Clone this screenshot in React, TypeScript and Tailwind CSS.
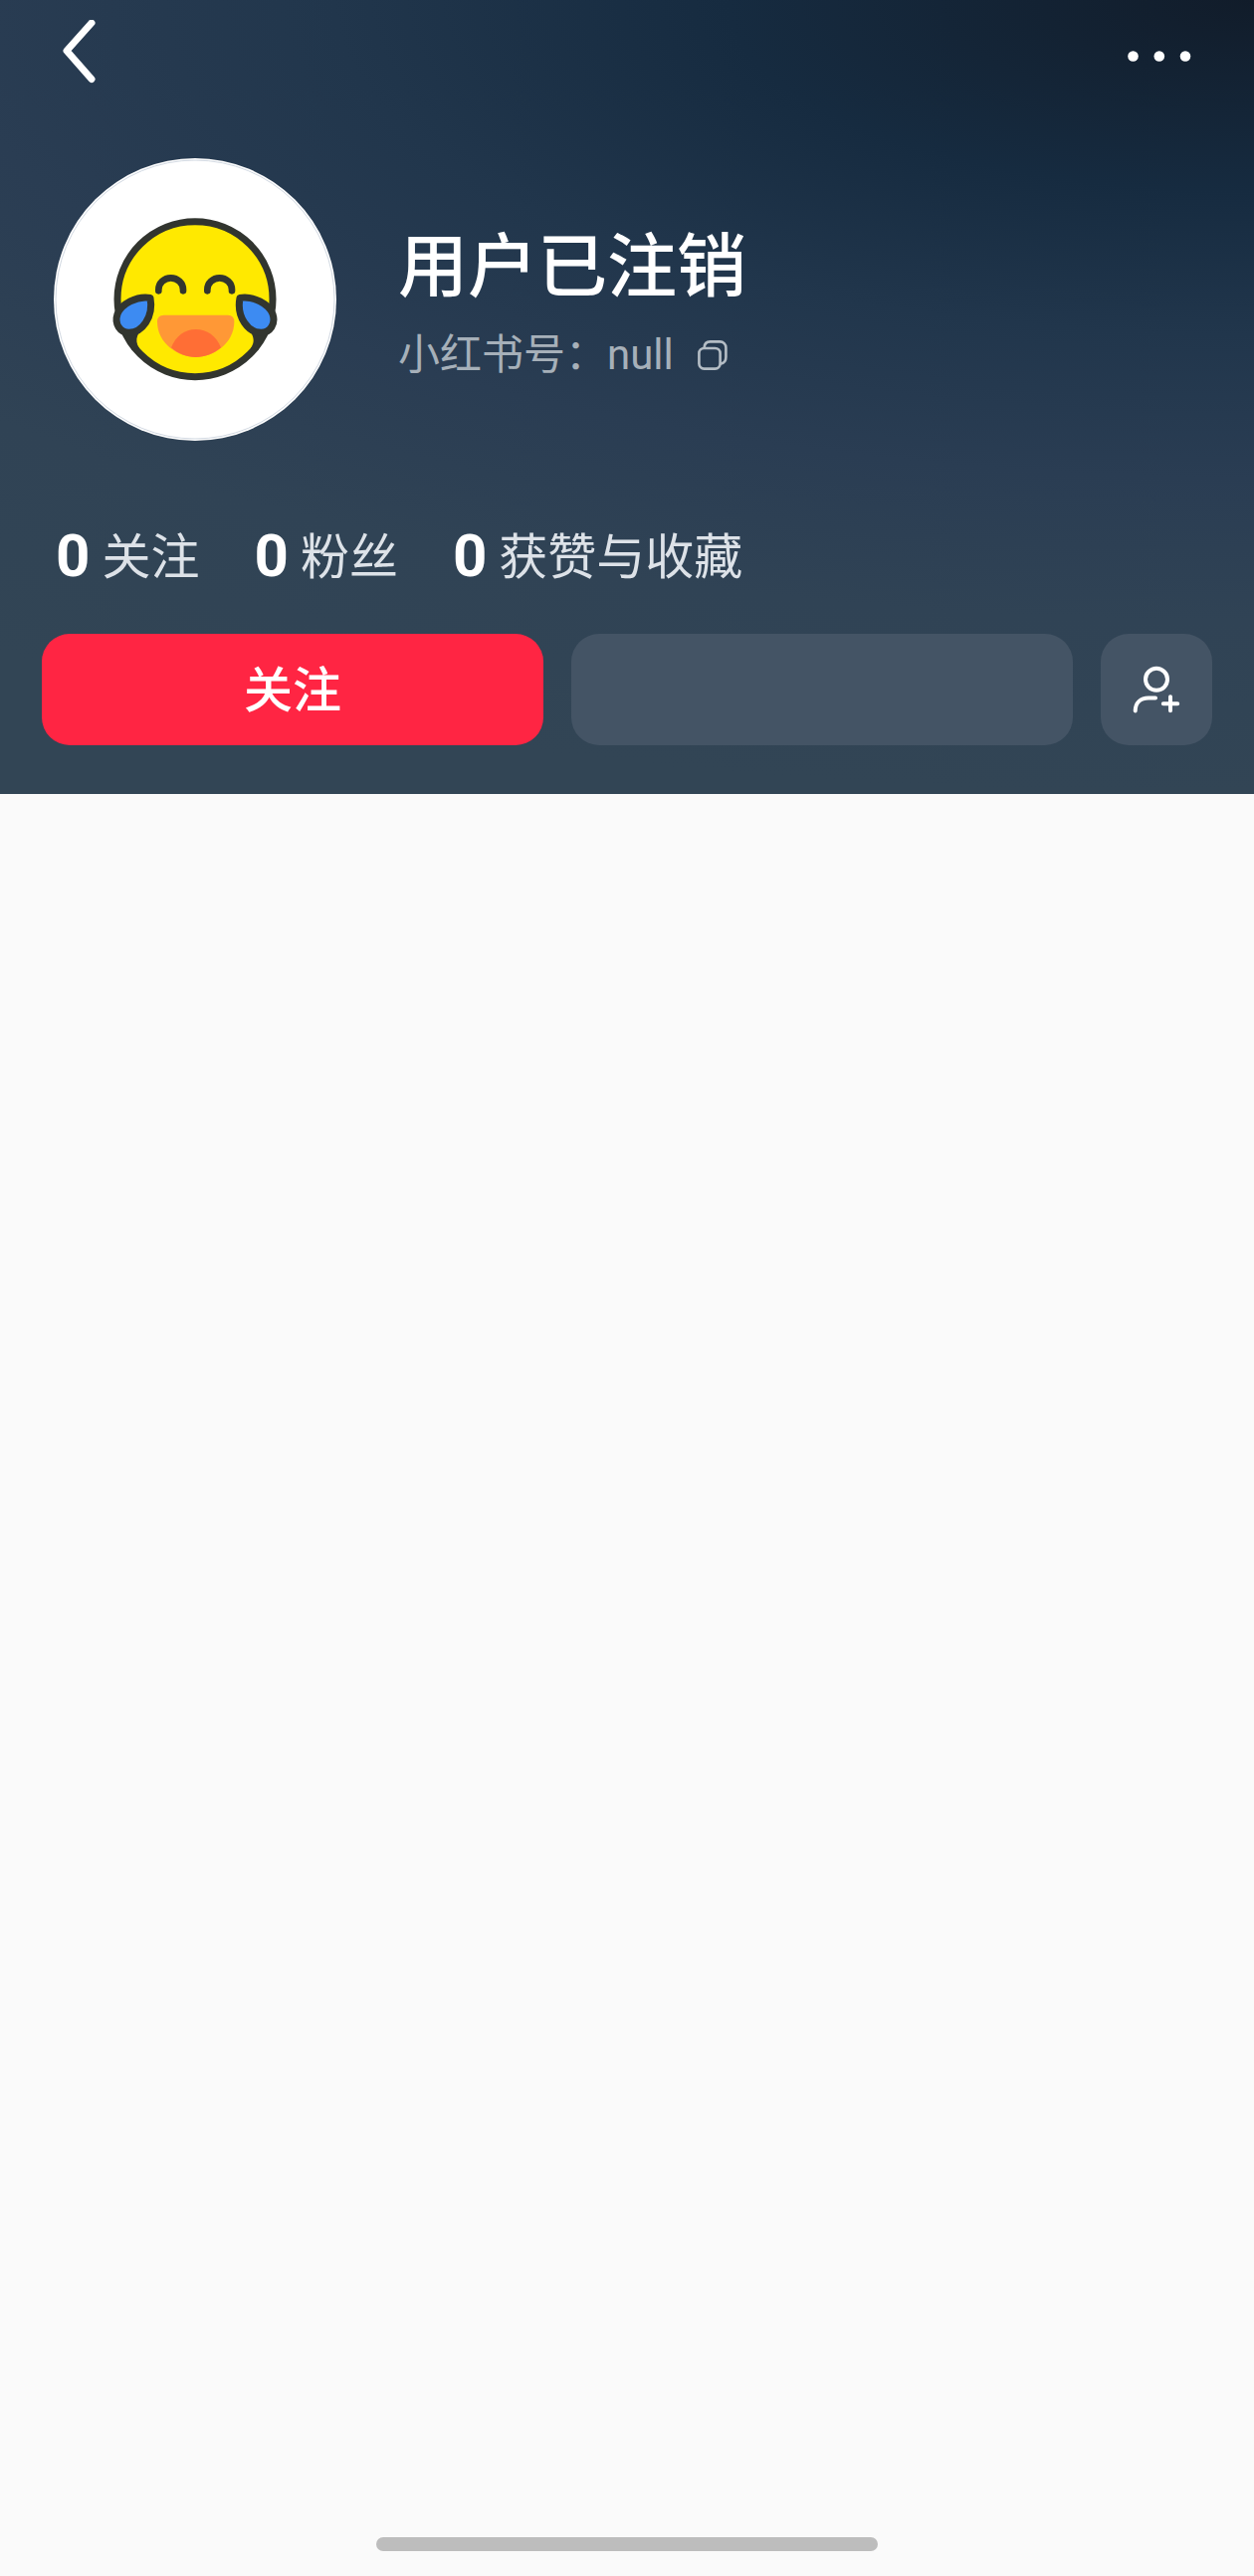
const stats = [
  { label: '关注', value: 0 },
  { label: '粉丝', value: 0 },
  { label: '获赞与收藏', value: 0 },
];

function BackIcon() {
  return (
    <svg className="w-16 h-16" viewBox="0 0 64 64" fill="none" stroke="currentColor" strokeWidth="7" strokeLinecap="round" strokeLinejoin="round">
      <path d="M44 3 19 31 44 59.5" />
    </svg>
  );
}

function MoreIcon() {
  return (
    <svg className="w-16 h-16" viewBox="0 0 64 64" fill="currentColor">
      <circle cx="5.5" cy="36.5" r="5.3" />
      <circle cx="31.8" cy="36.5" r="5.3" />
      <circle cx="58" cy="36.5" r="5.3" />
    </svg>
  );
}

function CopyIcon() {
  return (
    <svg className="w-[30px] h-[30px]" viewBox="0 0 30 30" fill="none" stroke="currentColor" strokeWidth="2.6" strokeLinecap="round">
      <rect x="1.4" y="8" width="21.2" height="20.6" rx="5" />
      <path d="M6.6 7.4C6.8 3.8 9 1.4 12.6 1.4H22.4a6 6 0 0 1 6 6V17c0 3.8-1.8 6-5.4 6.6" />
    </svg>
  );
}

function AddUserIcon() {
  return (
    <svg className="w-14 h-14" viewBox="0 0 56 56" fill="none" stroke="currentColor" strokeWidth="4" strokeLinecap="round">
      <circle cx="28" cy="17.8" r="11" />
      <path d="M6.7 49.4C6.9 41.5 12 36.6 20 36.6H27" />
      <path d="M42 35.2V49.2M34.8 42.3H49.2" />
    </svg>
  );
}

function Tear() {
  return (
    <>
      <path d="M200 512L275 505C255 525 240 546 258 573L236 578Z" fill="#32352f" />
      <path
        d="M291 421C250 414 203 440 192 470C182 500 200 526 227 526C265 526 302 480 291 421Z"
        fill="#3d8bf2"
        stroke="#32352f"
        strokeWidth="21"
        strokeLinejoin="round"
      />
    </>
  );
}

function Avatar() {
  return (
    <svg className="w-[284px] h-[284px] shrink-0" viewBox="0 0 852 852" role="img" aria-label="头像">
      <circle cx="426" cy="426" r="426" fill="#fff" />
      <circle cx="426" cy="426" r="420" fill="none" stroke="#b9c4d2" strokeWidth="2" />
      <circle cx="426" cy="425" r="234" fill="#ffe900" stroke="#32352f" strokeWidth="21" />
      <g fill="none" stroke="#32352f" strokeWidth="20" strokeLinecap="round">
        <path d="M316 400V396a37 35 0 0 1 74 0V400" />
        <path d="M463 400V396a37 35 0 0 1 74 0V400" />
      </g>
      <path d="M332 473H525Q544 473 544 493C544 560 480 600 428 600C376 600 312 560 312 493Q312 473 332 473Z" fill="#ff9836" />
      <path d="M354 571C368 536 395 516 428 516C462 516 490 536 504 571C482 590 455 600 428 600C400 600 376 590 354 571Z" fill="#ff6e35" />
      <Tear />
      <g transform="translate(852 0) scale(-1 1)">
        <Tear />
      </g>
    </svg>
  );
}

export default function App() {
  return (
    <div className="min-h-screen flex flex-col bg-[#fafafa] font-['Noto_Sans_CJK_SC',sans-serif]">
      <header className="px-[42px] pb-[49px] text-white bg-[radial-gradient(2200px_800px_at_100%_0%,#111c2a_0%,#162b40_24%,#21364c_42%,#2a3d53_60%,#304355_78%,#324555_100%)]">
        <nav className="h-[103px] flex items-center justify-between px-[6px]">
          <button aria-label="返回">
            <BackIcon />
          </button>
          <button aria-label="更多" className="mr-[15px]">
            <MoreIcon />
          </button>
        </nav>

        <section className="mt-14 flex items-center gap-[62px] pl-3">
          <Avatar />
          <div className="flex flex-col gap-3">
            <h1 className="text-[70px] leading-[96px] font-medium">用户已注销</h1>
            <div className="flex items-center gap-6 text-[42px] leading-[60px] text-[#a6b0b9]">
              <span>
                小红书号：<span className="font-[Roboto]">null</span>
              </span>
              <button aria-label="复制" className="pt-1 text-[#b4bdc5]">
                <CopyIcon />
              </button>
            </div>
          </div>
        </section>

        {/* Stats */}
        <ul className="mt-[77px] flex gap-[55px] pl-[14px]">
          {stats.map((item) => (
            <li key={item.label} className="flex items-center gap-3 leading-[72px]">
              <span className="font-[Roboto] font-bold text-[60px]">{item.value}</span>
              <span className="pb-1.5 text-[49px] text-[#dde2e8]">{item.label}</span>
            </li>
          ))}
        </ul>

        {/* Actions */}
        <div className="mt-[39px] flex gap-7">
          <button className="flex-1 h-28 pb-1.5 rounded-[28px] bg-[#ff2543] text-[49px] font-medium">关注</button>
          <button aria-label="私信" className="flex-1 h-28 rounded-[28px] bg-[#445465]" />
          <button aria-label="添加好友" className="w-28 h-28 rounded-[28px] bg-[#445465] flex items-center justify-center">
            <AddUserIcon />
          </button>
        </div>
      </header>

      <main className="flex-1" />

      <footer className="flex justify-center pb-[25px]">
        <div className="w-2/5 h-[14px] rounded-full bg-[#bdbdbd]" />
      </footer>
    </div>
  );
}
